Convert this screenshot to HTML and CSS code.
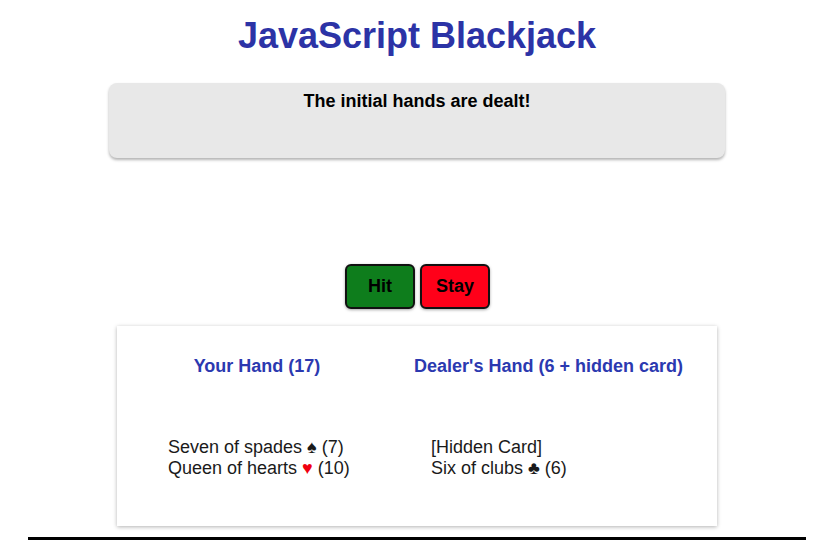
FILE: index.html
```html
<!DOCTYPE html>
<html lang="en">
<head>
<meta charset="utf-8">
<title>JavaScript Blackjack</title>
<link rel="stylesheet" href="styles.css">
</head>
<body>
<h1 class="title">JavaScript Blackjack</h1>
<div class="message">The initial hands are dealt!</div>
<div class="controls">
  <button class="btn btn-hit">Hit</button>
  <button class="btn btn-stay">Stay</button>
</div>
<div class="table">
  <h2 class="hand-title">Your Hand (17)</h2>
  <h2 class="hand-title">Dealer's Hand (6 + hidden card)</h2>
  <ul class="cards">
    <li>Seven of spades &#9824; (7)</li>
    <li>Queen of hearts <span class="red">&#9829;</span> (10)</li>
  </ul>
  <ul class="cards">
    <li>[Hidden Card]</li>
    <li>Six of clubs &#9827; (6)</li>
  </ul>
</div>
<div class="rule"></div>
</body>
</html>
```
FILE: styles.css
```css
* { box-sizing: border-box; }
body {
  margin: 0;
  padding-left: 2px;
  font-family: "Liberation Sans", Arial, sans-serif;
  background: #fff;
  color: #1a1a1a;
}
.title {
  margin: 15px 0 0;
  font-size: 36px;
  line-height: 41px;
  font-weight: bold;
  text-align: center;
  color: #2c33a6;
}
.message {
  width: 616px;
  height: 75px;
  margin: 27px auto 0;
  padding-top: 8px;
  background: #e8e8e8;
  border-radius: 8px;
  box-shadow: 0 2px 3px rgba(0,0,0,0.3);
  text-align: center;
  font-size: 18px;
  line-height: 21px;
  font-weight: bold;
  color: #000;
}
.controls {
  display: flex;
  justify-content: center;
  gap: 5px;
  margin-top: 106px;
  padding-left: 1px;
}
.btn {
  width: 70px;
  height: 45px;
  border: 2px solid #111;
  border-radius: 6px;
  font-family: "Liberation Sans", Arial, sans-serif;
  font-size: 18px;
  font-weight: bold;
  color: #000;
  box-shadow: 0 1px 3px rgba(0,0,0,0.35);
  padding: 0;
}
.btn-hit { background: #0e7d1c; }
.btn-stay { background: #ff0019; }
.table {
  width: 600px;
  margin: 17px auto 0;
  padding: 30px 11px 47px;
  background: #fff;
  box-shadow: 0 1px 4px rgba(0,0,0,0.3);
  display: grid;
  grid-template-columns: 258px 315px;
  column-gap: 5px;
}
.hand-title {
  margin: 0;
  font-size: 18px;
  line-height: 21px;
  font-weight: bold;
  text-align: center;
  color: #2b39b0;
}
.cards {
  list-style: none;
  margin: 60px 0 0;
  padding-left: 40px;
  font-size: 18px;
  line-height: 21px;
}
.red { color: #f00010; }
.rule {
  height: 3px;
  margin: 11px 26px 0 26px;
  background: #000;
}
```
